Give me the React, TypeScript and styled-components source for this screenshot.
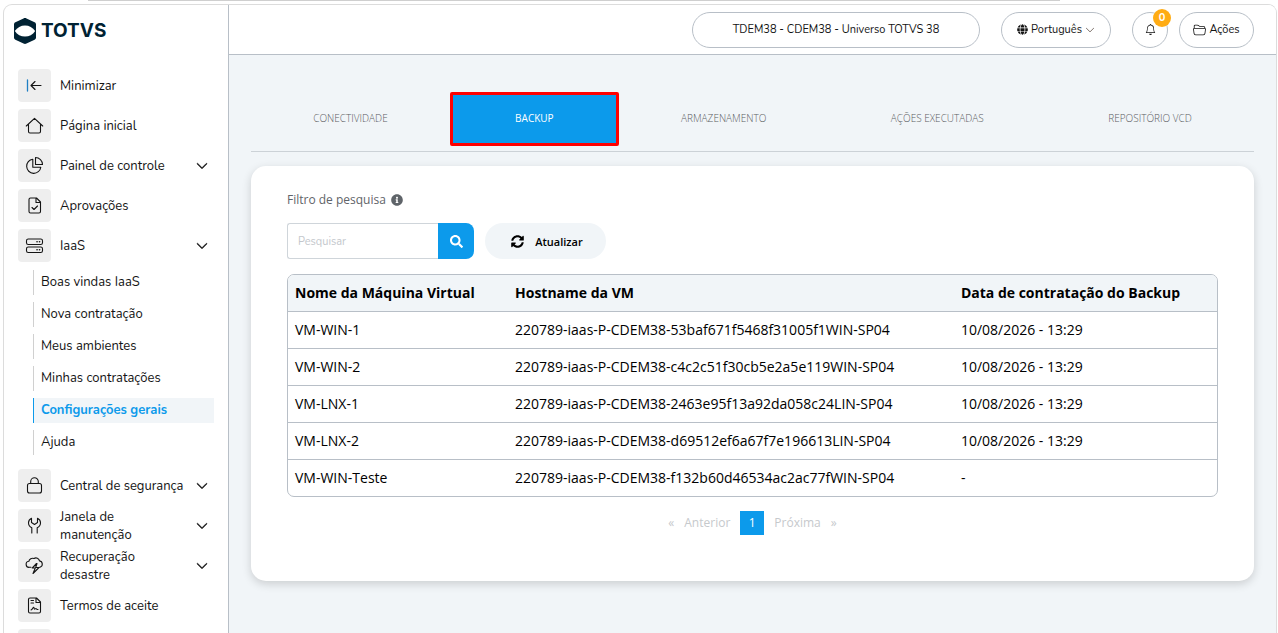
import React from 'react';
import styled, { createGlobalStyle, css } from 'styled-components';
import { BsBell, BsChevronDown, BsFolder2Open } from 'react-icons/bs';
import { FaGlobe, FaInfoCircle, FaSearch, FaSyncAlt } from 'react-icons/fa';

const color = {
  navy: '#002233',
  blue: '#0c9aeb',
  surface: '#f1f5f8',
  line: '#b8bfc7',
  tile: '#eeeeee',
  ink: '#141414',
};

const sans = "'Open Sans', 'Noto Sans', sans-serif";
const rounded = "Nunito, Lato, 'Open Sans', sans-serif";

const GlobalStyle = createGlobalStyle`
  *, *::before, *::after { box-sizing: border-box; }
  body { margin: 0; background: #fff; color: #000; font-family: ${sans}; }
  button, input { font: inherit; color: inherit; }
  button { cursor: pointer; }
  ul { list-style: none; margin: 0; padding: 0; }
  a { color: inherit; text-decoration: none; }
`;

const Page = styled.div`
  height: 100vh;
  padding: 0 1px 0 3px;
  display: flex;
  flex-direction: column;
  overflow: hidden;
`;

const TopStrip = styled.div`
  flex: none;
  height: 1px;
  margin: 0 17% 3px 85px;
  background: #cfcfcf;
`;

const Frame = styled.div`
  flex: 1;
  min-height: 0;
  display: flex;
  border: 1px solid #dcdcdc;
  border-bottom: 0;
  border-radius: 9px 9px 0 0;
  overflow: hidden;
`;

const Sidebar = styled.aside`
  flex: none;
  width: 225px;
  padding: 12px 14px 0 14px;
  border-right: 1px solid ${color.line};
  overflow: hidden;
  font-family: ${rounded};
`;

const Brand = styled.a`
  display: flex;
  align-items: center;
  gap: 5px;
  height: 28px;
  margin: 0 0 24px -4px;
  color: ${color.navy};
  font: 700 19px/28px Inter, sans-serif;
`;

const NavGroup = styled.ul`
  display: flex;
  flex-direction: column;
  gap: 7px;
`;

const navRow = css`
  display: flex;
  align-items: center;
  width: 100%;
  height: 33px;
  padding: 0 6px 0 0;
  border: 0;
  background: none;
  color: ${color.ink};
  font-size: 13px;
  line-height: 18px;
  text-align: left;
`;

const NavLink = styled.a`${navRow}`;
const NavToggle = styled.button`${navRow}`;

const IconTile = styled.span`
  flex: none;
  display: grid;
  place-items: center;
  width: 33px;
  height: 33px;
  margin-right: 9px;
  border-radius: 4px;
  background: ${color.tile};
`;

const NavLabel = styled.span`
  flex: 1;
  max-width: 125px;
`;

const Caret = styled(BsChevronDown)`
  flex: none;
  margin-left: auto;
  width: 12px;
  height: 12px;
  stroke: currentColor;
  stroke-width: 1;
`;

const SubMenu = styled.ul`
  display: flex;
  flex-direction: column;
  gap: 7px;
  padding: 8px 0 14px 15px;
`;

const SubLink = styled.a<{ $active?: boolean }>`
  display: block;
  height: 25px;
  padding-left: 7px;
  border-left: 1px solid ${p => (p.$active ? color.blue : '#d0d0d0')};
  background: ${p => (p.$active ? color.surface : 'transparent')};
  color: ${p => (p.$active ? color.blue : color.ink)};
  font-size: 13px;
  font-weight: ${p => (p.$active ? 700 : 400)};
  line-height: 25px;
`;

const Body = styled.div`
  flex: 1;
  min-width: 0;
  display: flex;
  flex-direction: column;
  background: ${color.surface};
`;

const Header = styled.header`
  flex: none;
  display: flex;
  align-items: center;
  justify-content: flex-end;
  height: 50px;
  padding: 0 22px;
  border-bottom: 1px solid ${color.line};
  background: #fff;
  font-family: ${rounded};
`;

const Pill = styled.button<{ $width: number; $gap: number }>`
  position: relative;
  display: flex;
  align-items: center;
  justify-content: center;
  gap: 3px;
  width: ${p => p.$width}px;
  height: 36px;
  margin-left: ${p => p.$gap}px;
  padding: 0;
  border: 1px solid ${color.line};
  border-radius: 18px;
  background: #fff;
  color: ${color.ink};
  font-size: 11px;
  line-height: 16px;
`;

const Badge = styled.span`
  position: absolute;
  top: -4px;
  right: -4px;
  width: 18px;
  height: 18px;
  border-radius: 50%;
  background: #ffac14;
  color: #fff;
  font-size: 11px;
  font-weight: 700;
  line-height: 18px;
  text-align: center;
`;

const Main = styled.main`
  flex: 1;
  min-height: 0;
  padding: 37px 22px 0;
`;

const Tabs = styled.nav`
  display: flex;
  height: 60px;
  margin-bottom: 14px;
  border-bottom: 1px solid #ccd2d7;
`;

const Tab = styled.button<{ $active?: boolean }>`
  flex: 1 1 auto;
  height: 54px;
  padding: 0 0 3px;
  border: ${p => (p.$active ? '3px solid #ff0000' : '0')};
  border-radius: ${p => (p.$active ? '2px' : '0')};
  background: ${p => (p.$active ? color.blue : 'transparent')};
  color: ${p => (p.$active ? '#fff' : '#5c6063')};
  font-size: 10px;
  font-weight: ${p => (p.$active ? 400 : 300)};
  line-height: 14px;
`;

const Card = styled.section`
  padding: 24px 36px 46px;
  border-radius: 15px;
  background: #fff;
  box-shadow: 0 3px 10px rgba(0, 0, 0, 0.16);
`;

const FilterLabel = styled.label`
  display: flex;
  align-items: center;
  gap: 5px;
  height: 20px;
  margin-bottom: 13px;
  color: #5f6469;
  font-size: 12px;
  line-height: 20px;
`;

const Filters = styled.form`
  display: flex;
  gap: 11px;
  height: 36px;
  margin-bottom: 15px;
`;

const SearchBox = styled.div`
  display: flex;
  width: 187px;
`;

const SearchInput = styled.input`
  flex: 1;
  min-width: 0;
  padding: 0 10px;
  border: 1px solid #cfd5da;
  border-right: 0;
  border-radius: 3px 0 0 3px;
  background: #fff;
  font-family: ${rounded};
  font-size: 11px;
  outline: none;
  &::placeholder { color: #c3c7cc; opacity: 1; }
`;

const SearchButton = styled.button`
  display: grid;
  place-items: center;
  width: 36px;
  padding: 0;
  border: 0;
  border-radius: 0 8px 8px 0;
  background: ${color.blue};
  color: #fff;
`;

const RefreshButton = styled.button`
  display: flex;
  align-items: center;
  justify-content: center;
  gap: 11px;
  width: 121px;
  padding: 0 0 0 3px;
  border: 0;
  border-radius: 18px;
  background: ${color.surface};
  font-size: 11px;
  font-weight: 600;
`;

const TableShell = styled.div`
  border: 1px solid ${color.line};
  border-radius: 7px;
  overflow: hidden;
`;

const Table = styled.table`
  width: 100%;
  border-collapse: separate;
  border-spacing: 0;
  table-layout: fixed;
  font-size: 14px;
  line-height: 20px;
  text-align: left;

  th, td { height: 37px; padding: 0 7px; white-space: nowrap; }
  th { height: 36px; background: ${color.surface}; font-weight: 700; }
  td { border-top: 1px solid ${color.line}; }
  th:nth-child(1) { width: 220px; }
  th:nth-child(2) { width: 48%; }
`;

const Pagination = styled.nav`
  display: flex;
  justify-content: center;
  align-items: center;
  gap: 10px;
  margin-top: 14px;
  height: 24px;
`;

const PageButton = styled.button<{ $current?: boolean }>`
  min-width: ${p => (p.$current ? '24px' : '0')};
  height: 24px;
  padding: 0;
  border: 0;
  background: ${p => (p.$current ? color.blue : 'none')};
  color: ${p => (p.$current ? '#fff' : '#c6c9cc')};
  font-size: 12px;
  line-height: 24px;
`;

const Glyph = ({ children }: { children: React.ReactNode }) => (
  <svg width="19" height="19" viewBox="0.5 0.5 19 19" fill="none" stroke="currentColor" strokeWidth="1.1" strokeLinecap="round" strokeLinejoin="round" aria-hidden="true">
    {children}
  </svg>
);

const icons = {
  collapse: <Glyph><path stroke="#1f7fc4" strokeWidth="1.300" d="M3 4.500v11" /><path d="M16.500 10H6.500M10.500 6l-4 4 4 4" /></Glyph>,
  home: <Glyph><path d="M1.800 10.500 10 2.800l8.200 7.700M4 8.600v7.400c0 .9.6 1.500 1.500 1.500h9c.9 0 1.500-.6 1.500-1.500V8.600" /></Glyph>,
  pie: <Glyph><path d="M8.300 3.700A7.100 7.100 0 1 0 16.300 11.700H8.300z" /><path d="M11 2v7h7a7 7 0 0 0-7-7z" /></Glyph>,
  approve: <Glyph><path d="M6 2.500h6l4 4V16c0 .9-.6 1.500-1.500 1.500H6c-.9 0-1.500-.6-1.500-1.500V4c0-.9.6-1.500 1.500-1.500zM11.500 2.500V7H16M7.500 12l2 2 3.500-3.500" /></Glyph>,
  server: <Glyph><rect x="2" y="3.500" width="16" height="5.500" rx="1.800" /><rect x="2" y="11.500" width="16" height="5.500" rx="1.800" /><path d="M12.500 6.300h.1M15 6.300h.1M12.500 14.300h.1M15 14.300h.1" strokeWidth="1.600" /></Glyph>,
  lock: <Glyph><rect x="3" y="8" width="14" height="9.500" rx="2" /><path d="M6.200 8V6a3.800 3.800 0 0 1 7.600 0v2" /></Glyph>,
  wrench: <Glyph><path d="M7.300 17.500v-5.200C5 11.300 4 9.600 4 7.300 4 5.300 5.200 3.700 7 2.800V7l3 2 3-2V2.800c1.800.9 3 2.500 3 4.500 0 2.300-1 4-3.300 5v5.200" /></Glyph>,
  storm: <Glyph><path d="M6.500 11.800H5A3 3 0 0 1 4.300 5.800 3.800 3.800 0 0 1 9.500 3a3.600 3.600 0 0 1 5.500 2.400 3.300 3.300 0 0 1 .5 6.400H15" /><path d="M12 8l-4.200 4.500h3L8.500 18l6-6h-3.300L12.500 8z" /></Glyph>,
  terms: <Glyph><path d="M5.500 2.500H12l4 4V16c0 .9-.6 1.500-1.500 1.500h-9c-.9 0-1.500-.6-1.500-1.500V4c0-.9.6-1.500 1.500-1.500zM11.500 2.500V7H16M6.500 5h2.500M6.500 7.500h2.500M6.500 14.500c1.300-.3 2-2.800 2.600-2.800.7 0 .3 2 1 2 .5 0 .8-.7 1.300-.7s.7 1 2.100 1" /></Glyph>,
};

type Item = { label: string; icon?: React.ReactNode; expandable?: boolean };

const mainItems: Item[] = [
  { label: 'Minimizar', icon: icons.collapse },
  { label: 'Página inicial', icon: icons.home },
  { label: 'Painel de controle', icon: icons.pie, expandable: true },
  { label: 'Aprovações', icon: icons.approve },
  { label: 'IaaS', icon: icons.server, expandable: true },
];

const iaasItems = ['Boas vindas IaaS', 'Nova contratação', 'Meus ambientes', 'Minhas contratações', 'Configurações gerais', 'Ajuda'];

const moreItems: Item[] = [
  { label: 'Central de segurança', icon: icons.lock, expandable: true },
  { label: 'Janela de manutenção', icon: icons.wrench, expandable: true },
  { label: 'Recuperação desastre', icon: icons.storm, expandable: true },
  { label: 'Termos de aceite', icon: icons.terms },
  { label: '' },
];

const tabs = ['CONECTIVIDADE', 'BACKUP', 'ARMAZENAMENTO', 'AÇÕES EXECUTADAS', 'REPOSITÓRIO VCD'];

const machines = [
  ['VM-WIN-1', '220789-iaas-P-CDEM38-53baf671f5468f31005f1WIN-SP04', '10/08/2026 - 13:29'],
  ['VM-WIN-2', '220789-iaas-P-CDEM38-c4c2c51f30cb5e2a5e119WIN-SP04', '10/08/2026 - 13:29'],
  ['VM-LNX-1', '220789-iaas-P-CDEM38-2463e95f13a92da058c24LIN-SP04', '10/08/2026 - 13:29'],
  ['VM-LNX-2', '220789-iaas-P-CDEM38-d69512ef6a67f7e196613LIN-SP04', '10/08/2026 - 13:29'],
  ['VM-WIN-Teste', '220789-iaas-P-CDEM38-f132b60d46534ac2ac77fWIN-SP04', '-'],
];

const NavItem = ({ label, icon, expandable }: Item) => {
  const content = (
    <>
      <IconTile>{icon}</IconTile>
      <NavLabel>{label}</NavLabel>
      {expandable && <Caret />}
    </>
  );
  return <li>{expandable ? <NavToggle type="button">{content}</NavToggle> : <NavLink href="#">{content}</NavLink>}</li>;
};

const Logo = () => (
  <svg width="22" height="26" viewBox="0 0 22 26" aria-hidden="true">
    <path fill="currentColor" d="M0 6.500C0 5.500.5 4.700 1.400 4.300L9.500.4c1-.5 2-.5 3 0l8.100 3.900c.9.400 1.400 1.200 1.400 2.200v13c0 1-.5 1.800-1.400 2.200l-8.100 3.900c-1 .5-2 .5-3 0l-8.100-3.900C.5 21.300 0 20.500 0 19.500z" />
    <path fill="#fff" d="M.8 13c2.500-3.700 6-5.600 10.200-5.600s7.700 1.900 10.200 5.600c-2.500 3.700-6 5.600-10.200 5.600S3.300 16.700.8 13z" />
  </svg>
);

export default function App() {
  return (
    <Page>
      <GlobalStyle />
      <TopStrip />
      <Frame>
        <Sidebar>
          <Brand href="#"><Logo />TOTVS</Brand>
          <nav>
            <NavGroup>{mainItems.map(item => <NavItem key={item.label} {...item} />)}</NavGroup>
            <SubMenu>
              {iaasItems.map(label => (
                <li key={label}><SubLink href="#" $active={label === 'Configurações gerais'}>{label}</SubLink></li>
              ))}
            </SubMenu>
            <NavGroup>{moreItems.map(item => <NavItem key={item.label} {...item} />)}</NavGroup>
          </nav>
        </Sidebar>
        <Body>
          <Header>
            <Pill type="button" $width={288} $gap={0}>TDEM38 - CDEM38 - Universo TOTVS 38</Pill>
            <Pill type="button" $width={110} $gap={21}><FaGlobe size={11} />Português <BsChevronDown size={10} color="#4a3a30" /></Pill>
            <Pill type="button" $width={36} $gap={21} aria-label="Notificações"><BsBell size={11} /><Badge>0</Badge></Pill>
            <Pill type="button" $width={75} $gap={11}><BsFolder2Open size={13} />Ações</Pill>
          </Header>
          <Main>
            <Tabs>
              {tabs.map(tab => <Tab key={tab} type="button" $active={tab === 'BACKUP'}>{tab}</Tab>)}
            </Tabs>
            <Card>
              <FilterLabel htmlFor="search">Filtro de pesquisa <FaInfoCircle size={12} /></FilterLabel>
              <Filters onSubmit={e => e.preventDefault()}>
                <SearchBox>
                  <SearchInput id="search" type="text" placeholder="Pesquisar" />
                  <SearchButton type="submit" aria-label="Pesquisar"><FaSearch size={13} /></SearchButton>
                </SearchBox>
                <RefreshButton type="button"><FaSyncAlt size={13} />Atualizar</RefreshButton>
              </Filters>
              <TableShell>
                <Table>
                  <thead>
                    <tr>
                      <th scope="col">Nome da Máquina Virtual</th>
                      <th scope="col">Hostname da VM</th>
                      <th scope="col">Data de contratação do Backup</th>
                    </tr>
                  </thead>
                  <tbody>
                    {machines.map(([name, host, date]) => (
                      <tr key={name}><td>{name}</td><td>{host}</td><td>{date}</td></tr>
                    ))}
                  </tbody>
                </Table>
              </TableShell>
              <Pagination aria-label="Paginação">
                <PageButton type="button">«</PageButton>
                <PageButton type="button">Anterior</PageButton>
                <PageButton type="button" $current>1</PageButton>
                <PageButton type="button">Próxima</PageButton>
                <PageButton type="button">»</PageButton>
              </Pagination>
            </Card>
          </Main>
        </Body>
      </Frame>
    </Page>
  );
}
